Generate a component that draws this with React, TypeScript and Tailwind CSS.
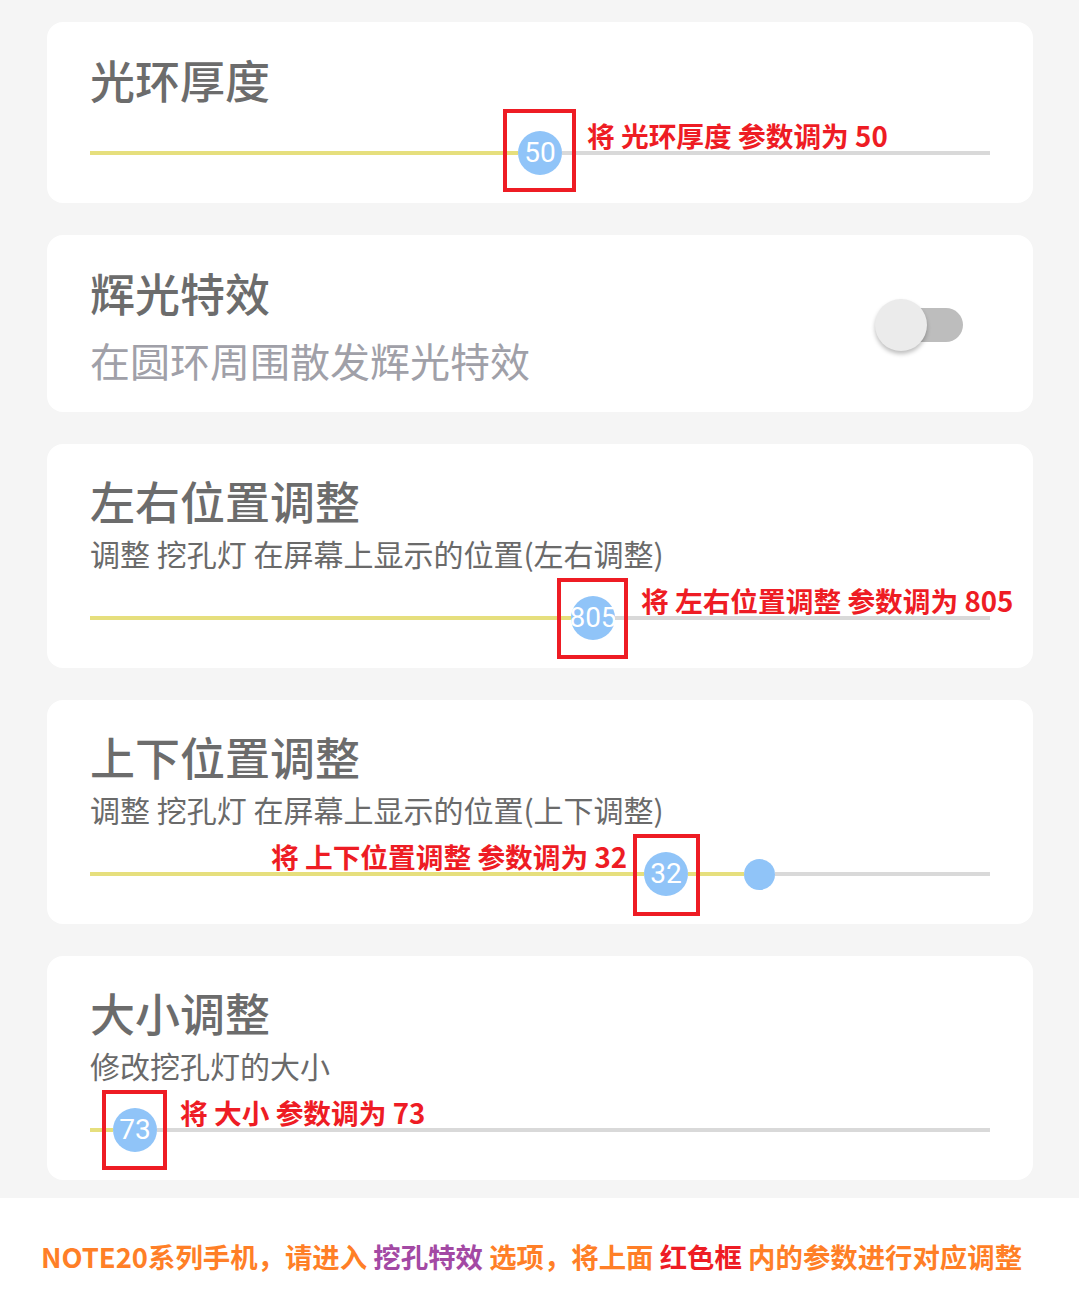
import React from "react"

const cjk = { fontFamily: '"Noto Sans CJK SC", "Noto Sans", sans-serif' }
const num = { fontFamily: 'Roboto, "Noto Sans", sans-serif' }

type Box = { left: number; top: number; w: number; h: number }
type Note = { text: string; left: number }

function Thumb({ value, size = 44 }: { value?: string; size?: number }) {
  return (
    <div
      className="flex shrink-0 items-center justify-center rounded-full bg-[#90c4f8] text-[28px] leading-none text-white"
      style={{ width: size, height: size, ...num }}
    >
      {value}
    </div>
  )
}

function Slider({
  fill,
  value,
  box,
  note,
  extra,
}: {
  fill: number
  value: string
  box: Box
  note: Note
  extra?: { gap: number; size: number }
}) {
  return (
    <div className="relative flex h-[44px] items-center">
      <div className="h-[4px] shrink-0 bg-[#e6df7d]" style={{ width: fill }} />
      <Thumb value={value} />
      {extra ? (
        <>
          <div className="h-[4px] shrink-0 bg-[#e6df7d]" style={{ width: extra.gap }} />
          <Thumb size={extra.size} />
        </>
      ) : null}
      <div className="h-[4px] flex-1 bg-[#d9d9d9]" />
      <div
        className="absolute border-[4px] border-[#ee1c24]"
        style={{ left: box.left, top: box.top, width: box.w, height: box.h }}
      />
      <div
        className="absolute top-[-11px] whitespace-pre text-[27.7px] font-bold leading-[30px] text-[#ee1c24]"
        style={{ left: note.left, ...cjk }}
      >
        {note.text}
      </div>
    </div>
  )
}

function Title({ children }: { children: React.ReactNode }) {
  return (
    <div className="text-[45px] font-medium leading-[45px] text-[#6c6c6c]" style={cjk}>
      {children}
    </div>
  )
}

function Sub({ children }: { children: React.ReactNode }) {
  return (
    <div className="mt-[12px] text-[30px] leading-[36px] text-[#6a6a6a]" style={cjk}>
      {children}
    </div>
  )
}

export default function App() {
  return (
    <div className="flex min-h-[1315px] w-full flex-col bg-[#f5f5f5]">
      <div className="flex flex-col gap-[32px] pl-[47px] pr-[46px] pt-[22px] pb-[18px]">
        {/* 光环厚度 */}
        <div className="rounded-2xl bg-white px-[43px] pt-[35px] pb-[28px]">
          <Title>光环厚度</Title>
          <div className="mt-[29px]">
            <Slider
              fill={428}
              value="50"
              box={{ left: 413, top: -22, w: 73, h: 83 }}
              note={{ text: "将 光环厚度 参数调为 50", left: 497 }}
            />
          </div>
        </div>

        {/* 辉光特效 */}
        <div className="flex items-center justify-between rounded-2xl bg-white pl-[43px] pr-[70px] pt-[35px] pb-[32px]">
          <div>
            <Title>辉光特效</Title>
            <div className="mt-[25px] text-[40px] leading-[40px] text-[#a0a0a8]" style={cjk}>
              在圆环周围散发辉光特效
            </div>
          </div>
          <div className="relative h-[52px] w-[88px]">
            <div className="absolute right-0 top-[9px] h-[34px] w-[70px] rounded-full bg-[#bdbdbd]" />
            <div className="absolute left-0 top-0 h-[52px] w-[52px] rounded-full bg-[#ebebeb] shadow-[0_3px_4px_rgba(0,0,0,0.25)]" />
          </div>
        </div>

        {/* 左右位置调整 */}
        <div className="rounded-2xl bg-white px-[43px] pt-[34px] pb-[28px]">
          <Title>左右位置调整</Title>
          <Sub>调整 挖孔灯 在屏幕上显示的位置(左右调整)</Sub>
          <div className="mt-[25px]">
            <Slider
              fill={481}
              value="805"
              box={{ left: 467, top: -18, w: 71, h: 81 }}
              note={{ text: "将 左右位置调整 参数调为 805", left: 551 }}
            />
          </div>
        </div>

        {/* 上下位置调整 */}
        <div className="rounded-2xl bg-white px-[43px] pt-[34px] pb-[28px]">
          <Title>上下位置调整</Title>
          <Sub>调整 挖孔灯 在屏幕上显示的位置(上下调整)</Sub>
          <div className="mt-[25px]">
            <Slider
              fill={554}
              value="32"
              extra={{ gap: 56, size: 31 }}
              box={{ left: 543, top: -18, w: 67, h: 82 }}
              note={{ text: "将 上下位置调整 参数调为 32", left: 181 }}
            />
          </div>
        </div>

        {/* 大小调整 */}
        <div className="rounded-2xl bg-white px-[43px] pt-[34px] pb-[28px]">
          <Title>大小调整</Title>
          <Sub>修改挖孔灯的大小</Sub>
          <div className="mt-[25px]">
            <Slider
              fill={23}
              value="73"
              box={{ left: 12, top: -18, w: 65, h: 80 }}
              note={{ text: "将 大小 参数调为 73", left: 90 }}
            />
          </div>
        </div>
      </div>

      <div className="flex flex-1 items-center justify-center bg-white pr-[16px]">
        <div
          className="whitespace-pre text-[27.4px] font-bold text-[#ff7f27]"
          style={cjk}
        >
          NOTE20系列手机，请进入 <span className="text-[#a349a4]">挖孔特效</span> 选项，将上面{" "}
          <span className="text-[#ee1c24]">红色框</span> 内的参数进行对应调整
        </div>
      </div>
    </div>
  )
}
